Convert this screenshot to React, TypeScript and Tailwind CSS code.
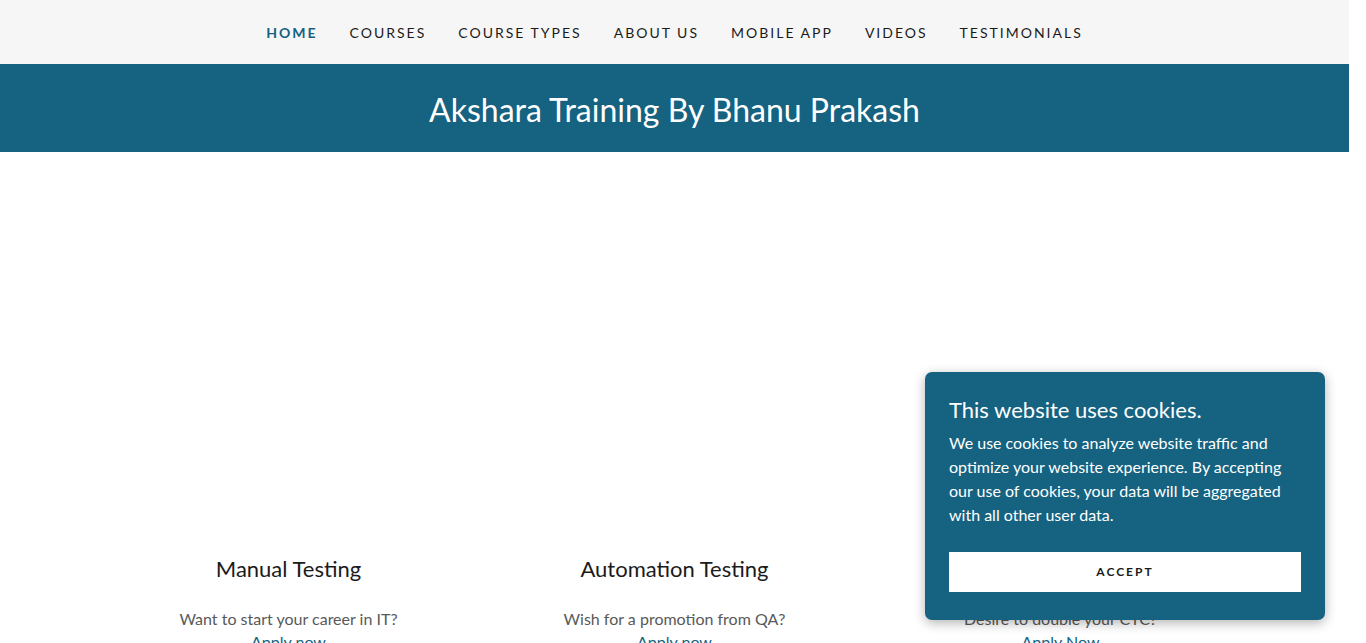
import React from "react";

const navItems = ["HOME", "COURSES", "COURSE TYPES", "ABOUT US", "MOBILE APP", "VIDEOS", "TESTIMONIALS"];

const columns = [
  { title: "Manual Testing", sub: "Want to start your career in IT?", link: "Apply now" },
  { title: "Automation Testing", sub: "Wish for a promotion from QA?", link: "Apply now" },
  { title: "Full Stack Testing", sub: "Desire to double your CTC?", link: "Apply Now" },
];

export default function App() {
  return (
    <div className="w-full h-[643px] overflow-hidden bg-white" style={{ fontFamily: "Lato, 'Noto Sans', sans-serif" }}>
      <div className="relative w-[1349px] h-[643px] bg-white">
        <nav className="h-16 bg-[#f6f6f6] flex items-center justify-center gap-[32px]">
          {navItems.map((item, i) => (
            <span
              key={item}
              className={`text-[14px] tracking-[2px] ${i === 0 ? "text-[#156281] font-bold" : "text-[#1b1b1b]"}`}
            >
              {item}
            </span>
          ))}
        </nav>
        <header className="h-[88px] bg-[#156281] flex items-center justify-center pt-[3px]">
          <h1 className="text-white text-[32px] leading-none">Akshara Training By Bhanu Prakash</h1>
        </header>
        <div className="h-[403px]" />
        <div className="w-[1158px] mx-auto grid grid-cols-3">
          {columns.map((c) => (
            <div key={c.title} className="flex flex-col items-center">
              <h3 className="text-[22px] leading-[28px] text-[#1b1b1b]">{c.title}</h3>
              <p className="mt-[24px] text-[16px] leading-[24px] text-[#595959]">{c.sub}</p>
              <a className="text-[16px] leading-[24px] text-[#156281] -mt-[1px]">{c.link}</a>
            </div>
          ))}
        </div>

        <div className="absolute right-6 bottom-[23px] w-[400px] rounded-[7px] bg-[#156281] px-6 pt-[24px] pb-[28px] shadow-[0_3px_12px_rgba(0,0,0,0.3)]">
          <h2 className="text-white text-[22px] leading-[28px]">This website uses cookies.</h2>
          <p className="mt-[7px] text-white text-[16px] leading-[24px]">
            We use cookies to analyze website traffic and optimize your website experience. By accepting our use of cookies, your data will be aggregated with all other user data.
          </p>
          <button className="mt-[25px] w-full h-10 bg-white text-[#1b1b1b] text-[12px] font-bold tracking-[2px] flex items-center justify-center">
            ACCEPT
          </button>
        </div>
      </div>
    </div>
  );
}
